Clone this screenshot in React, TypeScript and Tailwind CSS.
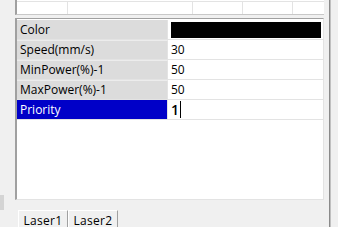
import React from "react";

const rows = [
  { label: "Color", value: "" },
  { label: "Speed(mm/s)", value: "30" },
  { label: "MinPower(%)-1", value: "50" },
  { label: "MaxPower(%)-1", value: "50" },
  { label: "Priority", value: "1" },
];

function PropRow({ label, value, idx }: { label: string; value: string; idx: number }) {
  const selected = label === "Priority";
  return (
    <div className="flex h-[20px] border-b border-[#e3e3e3]">
      <div
        className={[
          "w-[151px] shrink-0 flex items-center pl-[3px] text-[12px] border-r border-[#e3e3e3]",
          selected ? "bg-[#0000c8] text-white" : "bg-[#dcdcdc] text-black",
          idx > 0 && !selected ? "border-t border-t-[#ececec]" : "",
        ].join(" ")}
      >
        {label}
      </div>
      <div className="flex-1 flex items-center pl-[3px] bg-white text-[12px] text-black">
        {label === "Color" ? (
          <div className="h-[16px] w-[150px] bg-black" />
        ) : selected ? (
          <span className="flex items-center text-[14px] font-semibold leading-none">
            {value}
            <span className="ml-[1px] inline-block h-[17px] w-[1px] bg-black" />
          </span>
        ) : (
          value
        )}
      </div>
    </div>
  );
}

export default function App() {
  return (
    <div
      className="flex w-[338px] h-[227px] bg-[#f0f0f0] overflow-hidden"
      style={{ fontFamily: '"Open Sans", "Noto Sans", sans-serif' }}
    >
      {/* left strip */}
      <div className="w-[15px] shrink-0 flex flex-col">
        <div className="h-[195px]" />
        <div className="h-[15px] w-[4px] bg-[#d4d4d4]" />
      </div>

      {/* center */}
      <div className="w-[309px] shrink-0 flex flex-col">
        {/* upper table */}
        <div className="h-[15px] shrink-0 flex flex-col bg-white border-l-2 border-l-[#a0a0a0] border-b border-b-[#c8c8c8]">
          <div className="h-[2px] border-b border-[#e3e3e3]" />
          <div className="flex-1 flex">
            <div className="w-[51px] border-r border-[#e3e3e3]" />
            <div className="w-[125px] border-r border-[#e3e3e3]" />
            <div className="w-[50px] border-r border-[#e3e3e3]" />
            <div className="w-[50px] border-r border-[#e3e3e3]" />
            <div className="flex-1" />
          </div>
        </div>

        <div className="h-[3px] shrink-0" />

        {/* property grid */}
        <div className="h-[182px] shrink-0 bg-white border-l-2 border-l-[#a0a0a0] border-t border-t-[#a0a0a0] border-r border-r-[#e3e3e3] border-b border-b-[#e3e3e3] pt-[1px]">
          {rows.map((r, i) => (
            <PropRow key={r.label} label={r.label} value={r.value} idx={i} />
          ))}
        </div>

        {/* tabs */}
        <div className="flex shrink-0 pl-[3px] pt-[10px] text-[12px] text-black">
          <div className="h-[20px] w-[50px] flex items-center justify-center tracking-[0.3px] border-t border-l border-[#ffffff] border-r border-r-[#a0a0a0] bg-[#f0f0f0]">
            Laser1
          </div>
          <div className="h-[20px] w-[50px] flex items-center justify-center tracking-[0.3px] border-t border-l border-[#ffffff] border-r border-r-[#a0a0a0] bg-[#f0f0f0]">
            Laser2
          </div>
        </div>
      </div>

      <div className="w-[5px] shrink-0" />
      {/* right divider */}
      <div className="w-[2px] shrink-0 bg-[#8a8a8a] border-r border-r-[#c0c0c0]" />
      <div className="flex-1" />
    </div>
  );
}
